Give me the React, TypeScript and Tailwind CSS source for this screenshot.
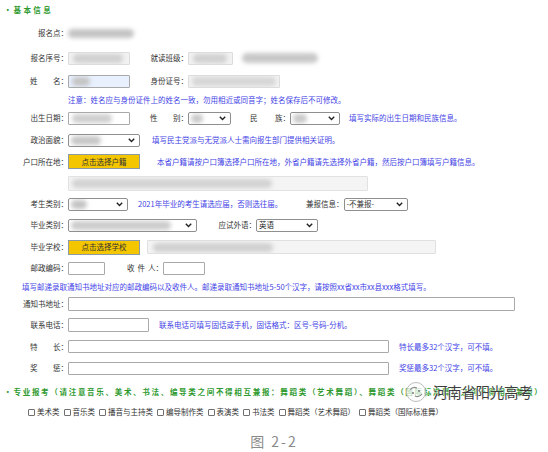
import type { ReactNode } from 'react'

const BLUE = 'text-[#3f3fe6]'

function Chevron() {
  return (
    <svg width="7" height="5" viewBox="0 0 7 5" className="shrink-0">
      <polyline points="0.8,0.8 3.5,3.6 6.2,0.8" fill="none" stroke="#222" strokeWidth="1.4" />
    </svg>
  )
}

function Smudge({ className = '' }: { className?: string }) {
  return <div className={`h-[9px] rounded-full bg-[#c4c4c4] blur-[2px] ${className}`} />
}

function Box({ className = '', children }: { className?: string; children?: ReactNode }) {
  return (
    <div className={`flex h-[13px] shrink-0 items-center overflow-hidden rounded-[1px] border border-[#a9a9a9] ${className}`}>
      {children}
    </div>
  )
}

function Select({ className = '', children }: { className?: string; children?: ReactNode }) {
  return (
    <div className={`flex h-[13px] shrink-0 items-center justify-between overflow-hidden rounded-[2px] border border-[#8f8f8f] bg-white pl-[2px] pr-[4px] ${className}`}>
      <div className="flex items-center">{children}</div>
      <Chevron />
    </div>
  )
}

function YellowButton({ children }: { children: ReactNode }) {
  return (
    <div className="flex h-[15px] w-[72px] shrink-0 items-center justify-center border border-[#8c9aa6] bg-[#f4c600] text-[#333]">
      {children}
    </div>
  )
}

function Label({ children, className = 'w-[68px]' }: { children: ReactNode; className?: string }) {
  return <div className={`shrink-0 text-right text-[#333] ${className}`}>{children}</div>
}

function Spaced({ a, b, mid, className }: { a: string; b: string; mid?: string; className: string }) {
  return (
    <div className={`flex shrink-0 justify-between text-[#333] ${className}`}>
      <span>{a}</span>
      {mid && <span>{mid}</span>}
      <span>{b}</span>
    </div>
  )
}

function Check({ label }: { label: string }) {
  return (
    <div className="flex items-center gap-[2px]">
      <div className="h-[7px] w-[7px] rounded-[1px] border border-[#6f6f6f] bg-white" />
      <span className="text-[#333]">{label}</span>
    </div>
  )
}

export default function App() {
  return (
    <div className="relative h-[452px] w-[548px] overflow-hidden bg-white font-['Noto_Sans_CJK_SC',sans-serif] text-[7.5px] leading-none">
      {/* 基本信息 */}
      <div className="flex h-[20px] items-center pl-[4px] font-bold text-[#2f9a2f]">
        <span className="mr-[2px]">•</span>
        <span className="tracking-[2.4px]">基本信息</span>
      </div>

      <div className="flex h-[26px] items-center">
        <Label>报名点：</Label>
        <Smudge className="w-[66px] bg-[#c4c4c4]" />
      </div>

      <div className="flex h-[24px] items-center">
        <Label>报名序号：</Label>
        <Box className="w-[62px] bg-[#f2f2f2] border-[#dcdcdc] pl-[4px]">
          <Smudge className="w-[50px] bg-[#d0d0d0]" />
        </Box>
        <Label className="w-[58px]">就读班级：</Label>
        <Box className="w-[45px] bg-[#f2f2f2] border-[#dcdcdc] pl-[4px]">
          <Smudge className="w-[34px] bg-[#d0d0d0]" />
        </Box>
        <Smudge className="ml-[9px] h-[10px] w-[76px] bg-[#c8c8c8]" />
      </div>

      <div className="flex h-[22px] items-center">
        <Spaced a="姓" b="名：" className="ml-[30px] w-[38px]" />
        <Box className="w-[62px] border-[#8f8f8f] bg-[#e8f0fe] pl-[3px]">
          <Smudge className="w-[18px] bg-[#a9a9b5]" />
        </Box>
        <Label className="w-[58px]">身份证号：</Label>
        <Box className="w-[92px] bg-[#f2f2f2] border-[#dcdcdc] pl-[3px]">
          <Smudge className="w-[84px] bg-[#d6d6d6]" />
        </Box>
      </div>

      <div className={`flex h-[15px] items-center pl-[68px] ${BLUE}`}>
        注意：姓名应与身份证件上的姓名一致，勿用相近或同音字；姓名保存后不可修改。
      </div>

      <div className="flex h-[22px] items-center">
        <Label>出生日期：</Label>
        <Box className="w-[62px] bg-white pl-[3px]">
          <Smudge className="w-[40px] bg-[#cfcfcf]" />
        </Box>
        <Spaced a="性" b="别：" className="ml-[20px] w-[38px]" />
        <Select className="w-[43px]">
          <Smudge className="w-[12px] bg-[#c9c9c9]" />
        </Select>
        <Spaced a="民" b="族：" className="ml-[19px] w-[40px]" />
        <Select className="w-[50px]">
          <Smudge className="w-[14px] bg-[#c9c9c9]" />
        </Select>
        <div className={`ml-[9px] ${BLUE}`}>填写实际的出生日期和民族信息。</div>
      </div>

      <div className="flex h-[22px] items-center">
        <Label>政治面貌：</Label>
        <Select className="w-[72px]">
          <Smudge className="w-[30px] bg-[#c7c7c7]" />
        </Select>
        <div className={`ml-[12px] ${BLUE}`}>填写民主党派与无党派人士需向报生部门提供相关证明。</div>
      </div>

      <div className="flex h-[21px] items-center">
        <Label>户口所在地：</Label>
        <YellowButton>点击选择户籍</YellowButton>
        <div className={`ml-[17px] ${BLUE}`}>
          本省户籍请按户口簿选择户口所在地，外省户籍请先选择外省户籍，然后按户口簿填写户籍信息。
        </div>
      </div>

      <div className="flex h-[22px] items-center">
        <Box className="ml-[68px] h-[15px] w-[300px] border-[#e2e2e2] bg-[#f4f4f4] pl-[3px]">
          <Smudge className="w-[200px] bg-[#d2d2d2]" />
        </Box>
      </div>

      <div className="flex h-[20px] items-center">
        <Label>考生类别：</Label>
        <Select className="w-[60px]">
          <Smudge className="w-[16px] bg-[#c2c2c2]" />
        </Select>
        <div className={`ml-[10px] w-[168px] shrink-0 ${BLUE}`}>2021年毕业的考生请选应届，否则选往届。</div>
        <div className="shrink-0 text-[#333]">兼报信息：</div>
        <Select className="w-[64px]">
          <span className="text-[#333]">-不兼报-</span>
        </Select>
      </div>

      <div className="flex h-[22px] items-center">
        <Label>毕业类别：</Label>
        <Select className="w-[129px]">
          <Smudge className="w-[100px] bg-[#cccccc]" />
        </Select>
        <Label className="w-[59px]">应试外语：</Label>
        <Select className="w-[62px]">
          <span className="text-[#222]">英语</span>
        </Select>
      </div>

      <div className="flex h-[22px] items-center">
        <Label>毕业学校：</Label>
        <YellowButton>点击选择学校</YellowButton>
        <Box className="ml-[7px] h-[14px] w-[289px] border-[#e0e0e0] bg-[#f4f4f4] pl-[5px]">
          <Smudge className="w-[120px] bg-[#d0d0d0]" />
        </Box>
      </div>

      <div className="flex h-[20px] items-center">
        <Label>邮政编码：</Label>
        <Box className="w-[37px] bg-white" />
        <Spaced a="收" mid="件" b="人：" className="ml-[22px] w-[36px]" />
        <Box className="w-[42px] bg-white" />
      </div>

      <div className={`flex h-[18px] items-center pl-[22px] ${BLUE}`}>
        填写邮递录取通知书地址对应的邮政编码以及收件人。邮递录取通知书地址5-50个汉字，请按照xx省xx市xx县xxx格式填写。
      </div>

      <div className="flex h-[16px] items-center">
        <Label>通知书地址：</Label>
        <Box className="h-[14px] w-[447px] bg-white" />
      </div>

      <div className="flex h-[25px] items-center">
        <Label>联系电话：</Label>
        <Box className="h-[14px] w-[81px] bg-white" />
        <div className={`ml-[10px] ${BLUE}`}>联系电话可填写固话或手机，固话格式：区号-号码-分机。</div>
      </div>

      <div className="flex h-[19px] items-center">
        <Spaced a="特" b="长：" className="ml-[30px] w-[38px]" />
        <Box className="w-[321px] bg-white" />
        <div className={`ml-[10px] ${BLUE}`}>特长最多32个汉字，可不填。</div>
      </div>

      <div className="flex h-[24px] items-center">
        <Spaced a="奖" b="惩：" className="ml-[30px] w-[38px]" />
        <Box className="w-[321px] bg-white" />
        <div className={`ml-[10px] ${BLUE}`}>奖惩最多32个汉字，可不填。</div>
      </div>

      {/* 专业报考 */}
      <div className="flex h-[24px] items-center whitespace-nowrap pl-[4px] font-bold text-[#2f9a2f]">
        <span className="mr-[2px]">•</span>
        <span className="tracking-[1.7px]">
          专业报考（请注意音乐、美术、书法、编导类之间不得相互兼报：舞蹈类（艺术舞蹈）、舞蹈类（国际标准舞）之间不得相互兼报）
        </span>
      </div>

      <div className="flex h-[16px] items-center gap-[4px] pl-[28px]">
        <Check label="美术类" />
        <Check label="音乐类" />
        <Check label="播音与主持类" />
        <Check label="编导制作类" />
        <Check label="表演类" />
        <Check label="书法类" />
        <Check label="舞蹈类（艺术舞蹈）" />
        <Check label="舞蹈类（国际标准舞）" />
      </div>

      <div className="flex h-[32px] items-start justify-center pt-[14px] text-[14px] tracking-[2px] text-[#8a8a8a]">
        图 2-2
      </div>

      {/* watermark over the section header */}
      <div className="absolute left-[404px] top-[381px] flex items-center gap-[5px]">
        <svg width="24" height="22" viewBox="0 0 24 22">
          <circle cx="12" cy="11" r="9.5" fill="rgba(255,255,255,0.7)" stroke="#bdbdbd" strokeWidth="1" />
          <path d="M6 9 q3 -4 7 -2" fill="none" stroke="#8a8a8a" strokeWidth="1.1" />
          <path d="M18 13 q-3 4 -7 2" fill="none" stroke="#8a8a8a" strokeWidth="1.1" />
          <circle cx="9" cy="12" r="1" fill="#7a7a7a" />
          <circle cx="15" cy="10" r="1" fill="#7a7a7a" />
        </svg>
        <span className="font-['Noto_Sans_CJK_SC',sans-serif] text-[14.5px] tracking-[-0.3px] text-[#3d3d3d] [text-shadow:0_0_2px_#fff,0_0_1px_#fff]">
          河南省阳光高考
        </span>
      </div>
    </div>
  )
}
